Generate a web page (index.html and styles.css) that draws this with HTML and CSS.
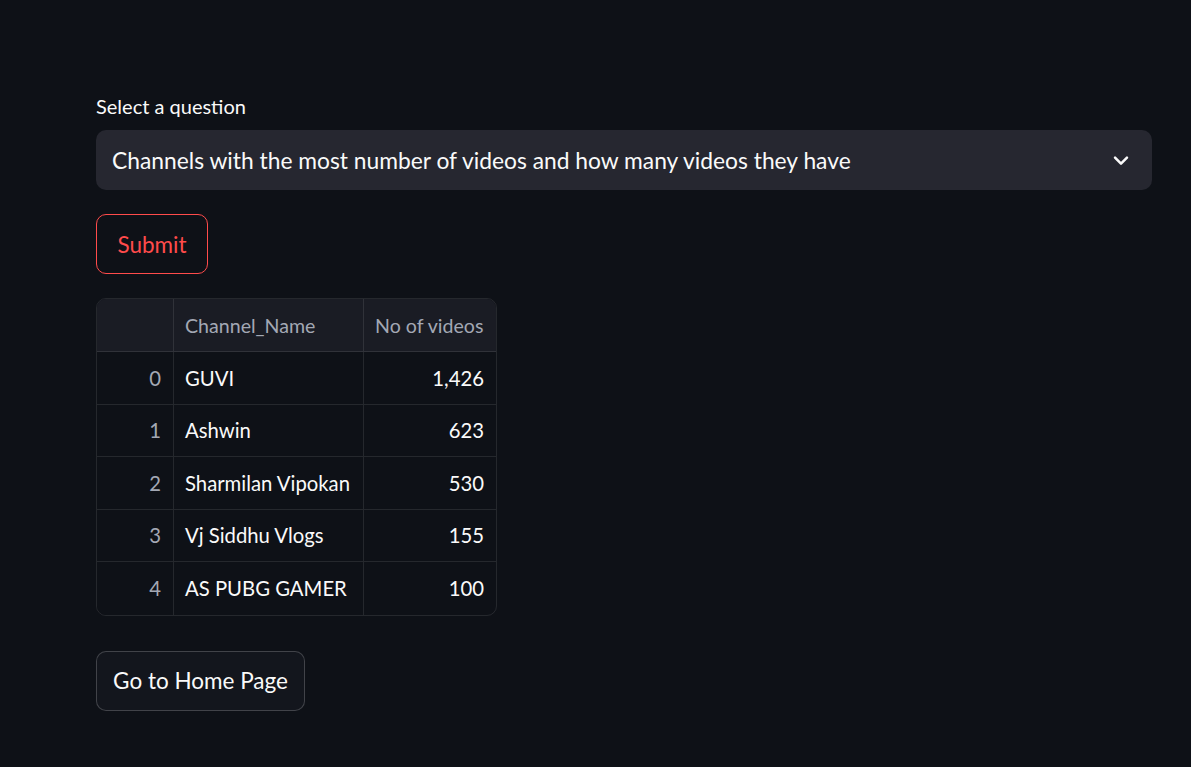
FILE: index.html
```html
<!DOCTYPE html>
<html>
<head>
<meta charset="utf-8">
<link rel="stylesheet" href="styles.css">
</head>
<body>
<main class="block">
  <div class="field">
    <label class="label">Select a question</label>
    <div class="select">
      <span class="select-text">Channels with the most number of videos and how many videos they have</span>
      <svg class="chevron" width="22" height="22" viewBox="0 0 24 24"><path d="M5.5 9.5l6.5 6.5 6.5-6.5" fill="none" stroke="#fafafa" stroke-width="2.8" stroke-linecap="round" stroke-linejoin="round"/></svg>
    </div>
  </div>
  <div><button class="btn btn-primary">Submit</button></div>
  <div class="table">
    <div class="row head">
      <div class="c idx"></div>
      <div class="c name">Channel_Name</div>
      <div class="c num">No of videos</div>
    </div>
    <div class="row"><div class="c idx">0</div><div class="c name">GUVI</div><div class="c num">1,426</div></div>
    <div class="row"><div class="c idx">1</div><div class="c name">Ashwin</div><div class="c num">623</div></div>
    <div class="row"><div class="c idx">2</div><div class="c name">Sharmilan Vipokan</div><div class="c num">530</div></div>
    <div class="row"><div class="c idx">3</div><div class="c name">Vj Siddhu Vlogs</div><div class="c num">155</div></div>
    <div class="row last"><div class="c idx">4</div><div class="c name">AS PUBG GAMER</div><div class="c num">100</div></div>
  </div>
  <div class="after-table"><button class="btn btn-secondary">Go to Home Page</button></div>
</main>
</body>
</html>
```
FILE: styles.css
```css
html, body {
  margin: 0;
  padding: 0;
  background: #0e1117;
  color: #fafafa;
  font-family: Lato, "Noto Sans", sans-serif;
}
.block {
  width: 1056px;
  margin-left: 96px;
  padding-top: 94px;
  display: flex;
  flex-direction: column;
  gap: 24px;
}
.field {
  display: flex;
  flex-direction: column;
  gap: 12px;
}
.label {
  font-size: 20px;
  line-height: 24px;
  color: #fafafa;
}
.select {
  height: 60px;
  background: #262730;
  border-radius: 10px;
  display: flex;
  align-items: center;
  justify-content: space-between;
  padding: 0 20px 0 16px;
  box-sizing: border-box;
}
.select-text {
  font-size: 22.8px;
}
.chevron {
  display: block;
}
.btn {
  height: 60px;
  border-radius: 10px;
  padding: 0;
  font-family: inherit;
  font-size: 22.5px;
  background: #0e1117;
  cursor: pointer;
}
.btn-primary {
  color: #ff4b4b;
  border: 1px solid #ff4b4b;
  width: 112px;
}
.btn-secondary {
  color: #fafafa;
  border: 1px solid rgba(250,250,250,0.2);
  background: #13161d;
  width: 209px;
}
.after-table {
  margin-top: 11px;
}
.table {
  width: 401px;
  box-sizing: border-box;
  border: 1px solid rgba(250,250,250,0.1);
  border-radius: 10px;
  overflow: hidden;
  font-size: 20.3px;
}
.row {
  display: grid;
  grid-template-columns: 77px 190px 132px;
  height: 52.5px;
  border-bottom: 1px solid rgba(250,250,250,0.1);
  box-sizing: border-box;
}
.row.head {
  height: 53px;
  background: #1a1c24;
  color: #a3a8b4;
  font-size: 19.6px;
}
.row.last {
  border-bottom: none;
}
.c {
  display: flex;
  align-items: center;
  padding: 0 12px 0 11px;
  border-right: 1px solid rgba(250,250,250,0.1);
  white-space: nowrap;
}
.c:last-child {
  border-right: none;
}
.c.idx {
  justify-content: flex-end;
  color: #a3a8b4;
  background: #0e1117;
}
.row.head .c.idx { background: #1a1c24; }
.c.num {
  justify-content: flex-end;
}
.row.head .c.num { justify-content: flex-start; }
```
